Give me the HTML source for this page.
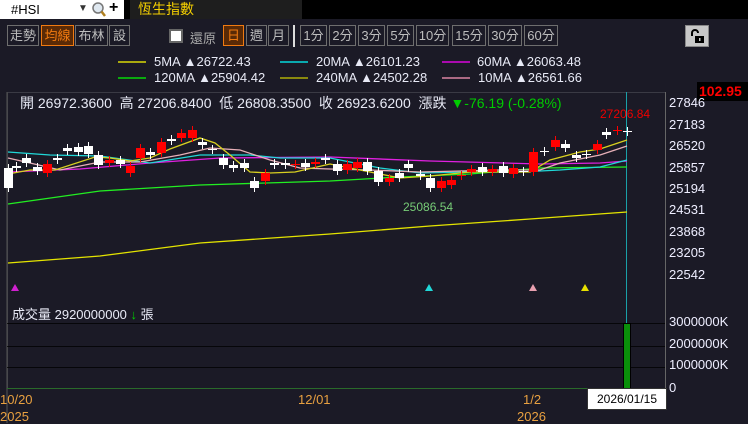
<!DOCTYPE html>
<html><head><meta charset="utf-8"><style>
*{margin:0;padding:0;box-sizing:border-box}
body{width:748px;height:423px;background:#1b1a26;overflow:hidden;position:relative;font-family:"Liberation Sans","Noto Sans CJK TC",sans-serif;color:#e8eaf6}
.a{position:absolute;white-space:nowrap}
.btn{position:absolute;top:25px;height:21px;border:1px solid #6e6e6e;color:#bdbdbd;font-size:13px;text-align:center;line-height:19px}
.on{border-color:#f07a10;background:#5a2a06;color:#f07a10}
.ax{position:absolute;left:669px;font-size:13px;color:#eef}
</style></head><body>
<div class="a" style="left:0;top:0;width:748px;height:19px;background:#000"></div>
<div class="a" style="left:0;top:0;width:124px;height:19px;background:#fff;color:#000;font-size:13px;line-height:19px;padding-left:11px">#HSI</div>
<div class="a" style="left:78px;top:3px;font-size:10px;color:#333">▼</div>
<svg class="a" style="left:91px;top:1px" width="16" height="17"><circle cx="7" cy="7" r="5" fill="#dfe8f0" stroke="#777" stroke-width="1.5"/><line x1="10.5" y1="10.5" x2="14" y2="15" stroke="#b08020" stroke-width="2.5"/></svg>
<div class="a" style="left:109px;top:-1px;font-size:16px;font-weight:bold;color:#000">+</div>
<div class="a" style="left:130px;top:0;width:172px;height:19px;background:#1e1e1e;color:#f5d000;font-size:14px;line-height:19px;padding-left:8px">恆生指數</div>

<div class="btn" style="left:7px;width:32px">走勢</div>
<div class="btn on" style="left:41px;width:33px">均線</div>
<div class="btn" style="left:75px;width:33px">布林</div>
<div class="btn" style="left:109px;width:21px">設</div>
<div class="a" style="left:169px;top:29px;width:14px;height:14px;background:#fff;border:2px solid #666"></div>
<div class="a" style="left:190px;top:28px;font-size:13px;color:#aaa">還原</div>
<div class="btn on" style="left:223px;width:21px">日</div>
<div class="btn" style="left:246px;width:21px">週</div>
<div class="btn" style="left:268px;width:21px">月</div>
<div class="a" style="left:293px;top:25px;width:2px;height:22px;background:#ddd"></div>
<div class="btn" style="left:300px;width:27px">1分</div>
<div class="btn" style="left:329px;width:27px">2分</div>
<div class="btn" style="left:358px;width:27px">3分</div>
<div class="btn" style="left:387px;width:27px">5分</div>
<div class="btn" style="left:416px;width:33px">10分</div>
<div class="btn" style="left:452px;width:34px">15分</div>
<div class="btn" style="left:488px;width:34px">30分</div>
<div class="btn" style="left:524px;width:34px">60分</div>
<div class="a" style="left:685px;top:25px;width:24px;height:22px;background:#c8c8c8;border:1px solid #888"></div>
<svg class="a" style="left:689px;top:28px" width="16" height="16"><path d="M3 8V5a3 3 0 0 1 6 0" fill="none" stroke="#000" stroke-width="2"/><rect x="6" y="8" width="9" height="7" fill="#000"/><rect x="10" y="10" width="1.5" height="3" fill="#ccc"/></svg>

<svg class="a" style="left:0;top:0" width="748" height="423">
<g stroke-width="1.2">
<line x1="118" y1="62" x2="146" y2="62" stroke="#ff0"/>
<line x1="280" y1="62" x2="308" y2="62" stroke="#0ff"/>
<line x1="442" y1="62" x2="470" y2="62" stroke="#f0f"/>
<line x1="118" y1="78" x2="146" y2="78" stroke="#0f0"/>
<line x1="280" y1="78" x2="308" y2="78" stroke="#cc0"/>
<line x1="442" y1="78" x2="470" y2="78" stroke="#f9b"/>
</g>
<rect x="7.5" y="92.5" width="658" height="296" fill="none" stroke="#3a3a44"/>
<line x1="7" y1="92" x2="7" y2="423" stroke="#555"/>
<line x1="665.5" y1="92" x2="665.5" y2="390" stroke="#666"/>
<g stroke="#000" stroke-width="0.8"><line x1="7" y1="323.5" x2="665" y2="323.5"/><line x1="7" y1="346.5" x2="665" y2="346.5"/><line x1="7" y1="367.5" x2="665" y2="367.5"/></g>
<line x1="7" y1="388.5" x2="626" y2="388.5" stroke="#2a6a2a"/>
<line x1="626.5" y1="92" x2="626.5" y2="388" stroke="#1aa0a8"/>
<g fill="none" stroke-width="1.3">
<polyline stroke="#e4e400" points="8,263 100,256 200,243 330,234 430,226 530,219 627,212"/>
<polyline stroke="#22ee22" points="8,204 100,191 200,185 330,181 400,177 470,174 540,168 627,167"/>
<polyline stroke="#e020e0" points="8,172 80,169 150,163 220,158 330,157 430,161 540,164 600,163 627,161"/>
<polyline stroke="#20d8d8" points="8,152 50,155 100,156 150,163 200,155 250,155 280,158 330,158 380,168 420,173 470,172 520,172 560,170 600,167 627,160"/>
<polyline stroke="#e8b0b8" points="8,158 30,163 60,170 100,162 140,162 180,155 210,148 240,150 270,160 300,168 330,169 370,170 420,172 500,170 540,170 560,163 600,155 627,146"/>
<polyline stroke="#d8d020" points="8,174 30,170 55,170 95,157 110,158 130,161 150,158 170,149 200,138 215,143 230,155 250,172 270,173 295,172 330,164 370,172 400,178 430,176 470,172 530,172 550,160 580,152 600,149 627,140"/>
</g>
<g id="c"></g>
<rect x="623.5" y="323.5" width="7" height="65" fill="#0a900a" stroke="#000"/>
<polygon points="11,291 15,284 19,291" fill="#d020d0"/>
<polygon points="425,291 429,284 433,291" fill="#20d8d8"/>
<polygon points="529,291 533,284 537,291" fill="#e8a0b0"/>
<polygon points="581,291 585,284 589,291" fill="#e8e000"/>
</svg>
<script>
var d=[[8,'W',168,188],[16,'W',166,168],[26,'W',158,163],[37,'W',167,171],[47,'R',164,173],[57,'W',158,160],[67,'W',148,151],[78,'W',147,152],[88,'W',146,154],[98,'W',155,165],[109,'R',160,163],[120,'W',160,164],[130,'R',166,173],[140,'R',148,158],[150,'W',152,155],[161,'R',142,153],[171,'W',139,141],[181,'R',133,138],[192,'R',130,138],[202,'W',142,145],[212,'W',149,150],[223,'W',158,165],[233,'W',165,168],[244,'W',163,168],[254,'W',181,188],[265,'R',173,181],[274,'W',163,165],[285,'W',163,165],[295,'R',164,165],[305,'W',163,167],[315,'R',162,164],[325,'W',158,160],[337,'W',164,171],[347,'R',164,170],[357,'R',162,168],[367,'W',162,171],[378,'W',171,182],[389,'R',178,182],[399,'W',173,178],[408,'W',164,168],[420,'W',174,176],[430,'W',178,188],[441,'R',181,188],[451,'R',180,185],[461,'R',175,176],[471,'R',169,172],[482,'W',167,172],[492,'R',169,172],[503,'W',166,173],[513,'R',168,174],[523,'W',171,172],[533,'R',152,172],[544,'W',151,152],[555,'R',140,147],[565,'W',144,148],[576,'W',155,158],[586,'W',154,155],[597,'R',144,150],[606,'W',132,135],[617,'R',130,131],[627,'W',131,132]];
var s='';d.forEach(function(c){var col=c[1]=='R'?'#f00':'#fff';s+='<line x1="'+(c[0]+.5)+'" y1="'+(c[2]-4)+'" x2="'+(c[0]+.5)+'" y2="'+(c[3]+4)+'" stroke="'+col+'"/><rect x="'+(c[0]-4)+'" y="'+c[2]+'" width="9" height="'+Math.max(1,c[3]-c[2])+'" fill="'+col+'"/>';});
document.getElementById('c').innerHTML=s;
</script>
<div class="a" style="left:154px;top:54px;font-size:13px">5MA ▲26722.43</div>
<div class="a" style="left:316px;top:54px;font-size:13px">20MA ▲26101.23</div>
<div class="a" style="left:477px;top:54px;font-size:13px">60MA ▲26063.48</div>
<div class="a" style="left:154px;top:70px;font-size:13px">120MA ▲25904.42</div>
<div class="a" style="left:316px;top:70px;font-size:13px">240MA ▲24502.28</div>
<div class="a" style="left:478px;top:70px;font-size:13px">10MA ▲26561.66</div>
<div class="a" style="left:20px;top:93px;font-size:14px">開 26972.3600 &nbsp;高 27206.8400 &nbsp;低 26808.3500 &nbsp;收 26923.6200 &nbsp;漲跌 <span style="color:#0c0">▼-76.19 (-0.28%)</span></div>
<div class="a" style="left:600px;top:107px;font-size:12px;color:#e00">27206.84</div>
<div class="a" style="left:403px;top:200px;font-size:12px;color:#7c7">25086.54</div>
<div class="a" style="left:697px;top:82px;width:51px;height:19px;background:#000;color:#f00;font-weight:bold;font-size:14px;line-height:19px;padding-left:2px">102.95</div>
<div class="ax" style="top:95px">27846</div><div class="ax" style="top:117px">27183</div><div class="ax" style="top:138px">26520</div><div class="ax" style="top:160px">25857</div><div class="ax" style="top:181px">25194</div><div class="ax" style="top:202px">24531</div><div class="ax" style="top:224px">23868</div><div class="ax" style="top:245px">23205</div><div class="ax" style="top:267px">22542</div>
<div class="ax" style="top:314px">3000000K</div><div class="ax" style="top:336px">2000000K</div><div class="ax" style="top:357px">1000000K</div><div class="ax" style="top:380px">0</div>
<div class="a" style="left:12px;top:304px;font-size:13px">成交量 2920000000 <span style="color:#0c0">↓</span> 張</div>
<div class="a" style="left:0;top:392px;font-size:13px;color:#e8a040">10/20</div>
<div class="a" style="left:0;top:409px;font-size:13px;color:#e8a040">2025</div>
<div class="a" style="left:298px;top:392px;font-size:13px;color:#e8a040">12/01</div>
<div class="a" style="left:523px;top:392px;font-size:13px;color:#e8a040">1/2</div>
<div class="a" style="left:517px;top:409px;font-size:13px;color:#e8a040">2026</div>
<div class="a" style="left:587px;top:388px;width:80px;height:22px;background:#fff;border:1px solid #333;color:#000;font-size:12px;line-height:20px;text-align:center">2026/01/15</div>
</body></html>
